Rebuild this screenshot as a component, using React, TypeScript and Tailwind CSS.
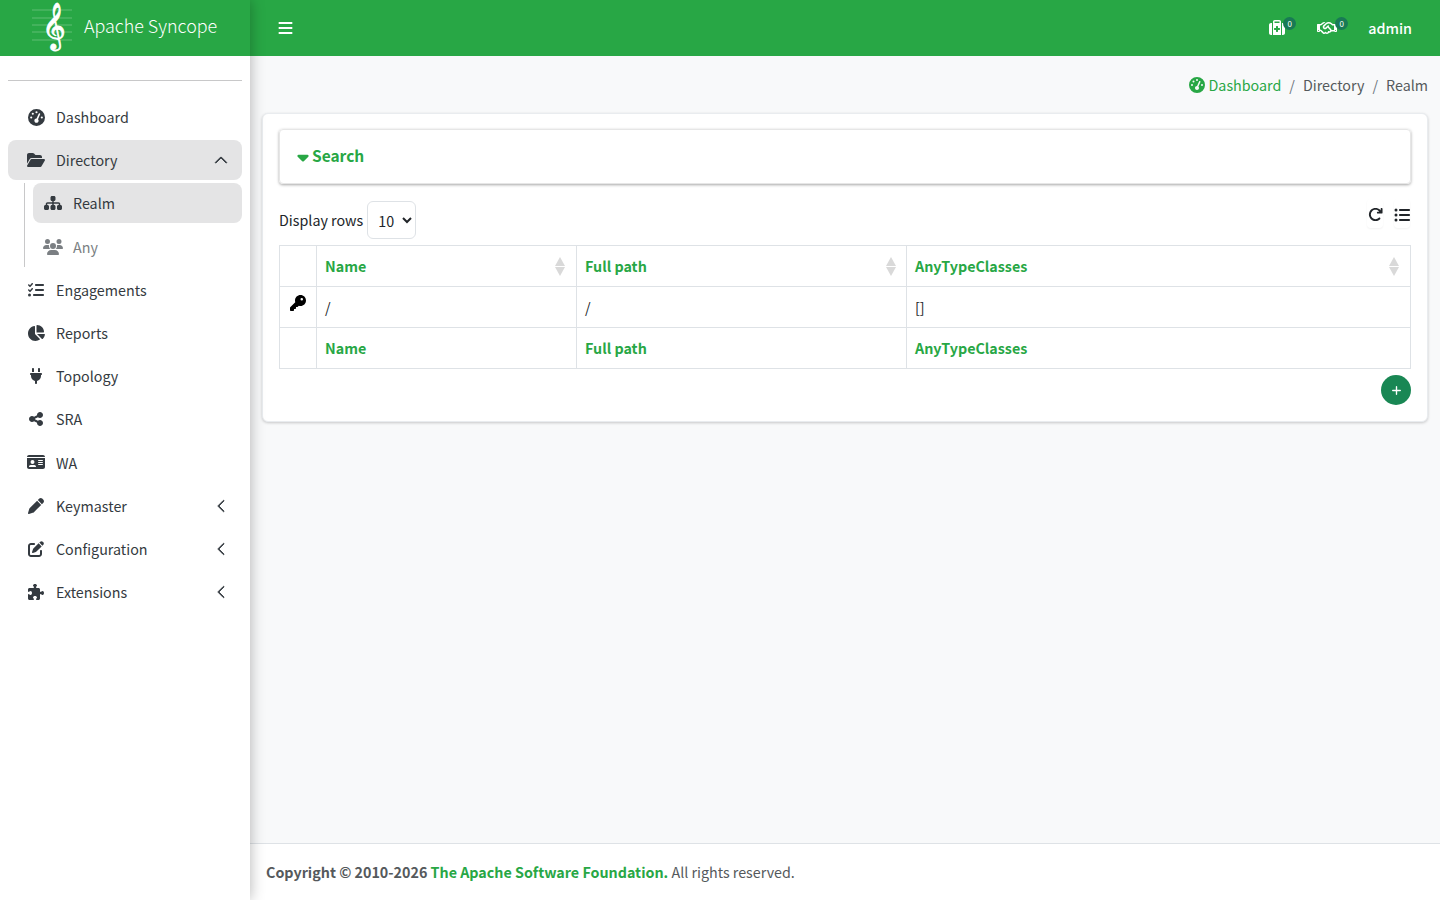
import {
  FaGaugeHigh,
  FaFolderOpen,
  FaSitemap,
  FaUsers,
  FaListCheck,
  FaChartPie,
  FaPlug,
  FaShareNodes,
  FaIdCard,
  FaPen,
  FaPenToSquare,
  FaPuzzlePiece,
  FaBars,
  FaSuitcaseMedical,
  FaRegHandshake,
  FaKey,
  FaCaretDown,
  FaArrowRotateRight,
  FaListUl,
  FaPlus,
} from "react-icons/fa6";
import { BsChevronLeft, BsChevronUp } from "react-icons/bs";
import type { ReactNode } from "react";

const font = "font-['Noto_Sans_CJK_SC','Liberation_Sans',sans-serif]";

function NavItem({ icon, label, chevron, active }: { icon: ReactNode; label: string; chevron?: ReactNode; active?: boolean }) {
  return (
    <div className={`flex h-10 items-center rounded-lg pl-[19px] pr-[14px] text-[#343a40] ${active ? "bg-[#e4e4e5]" : ""}`}>
      <span className="flex w-[18px] justify-center">{icon}</span>
      <span className="ml-[11px] flex-1 text-[14.3px]">{label}</span>
      {chevron}
    </div>
  );
}

const left = <BsChevronLeft className="h-[14px] w-[14px] stroke-1" />;

function Sidebar() {
  return (
    <aside className="z-10 flex w-[250px] shrink-0 flex-col bg-white shadow-[0_0_14px_rgba(0,0,0,0.3)]">
      <div className="flex h-14 items-center bg-[#28a745] pl-[32px] text-white">
        <div className="relative h-[50px] w-10">
          <svg className="absolute inset-0" width="40" height="50" viewBox="0 0 40 50">
            <path d="M0 7h40M0 15h40M0 22h40M0 29h40M0 37h40" stroke="#fff" strokeOpacity="0.25" strokeWidth="1" />
          </svg>
          <span className="absolute left-[10px] top-[-2px] font-['DejaVu_Sans',sans-serif] text-[40px] leading-[48px] [-webkit-text-stroke:0.8px_white]">𝄞</span>
        </div>
        <span className="ml-[12px] pb-[6px] text-[17.9px] font-light">Apache Syncope</span>
      </div>
      <div className="px-2">
        <div className="mt-6 border-t border-[#c8c8c9]" />
        <nav className="mt-4 flex flex-col gap-[3.2px]">
          <NavItem icon={<FaGaugeHigh className="h-[17px] w-[17px]" />} label="Dashboard" />
          <NavItem
            icon={<FaFolderOpen className="h-4 w-[18px]" />}
            label="Directory"
            active
            chevron={<BsChevronUp className="h-[14px] w-[14px] stroke-1" />}
          />
          <div className="-mb-[0.15px] -mt-[0.8px] ml-4 flex flex-col gap-1 border-l border-[#c8c8c9] pl-2">
            <div className="flex h-10 items-center rounded-lg bg-[#e4e4e5] pl-[11px] text-[#343a40]">
              <FaSitemap className="h-4 w-[18px]" />
              <span className="ml-[11px] text-[14.3px]">Realm</span>
            </div>
            <div className="flex h-10 items-center pl-[10px] text-[#7b7f83]">
              <FaUsers className="h-4 w-5" />
              <span className="ml-[10px] text-[14.3px]">Any</span>
            </div>
          </div>
          <NavItem icon={<FaListCheck className="h-4 w-4" />} label="Engagements" />
          <NavItem icon={<FaChartPie className="h-4 w-[18px]" />} label="Reports" />
          <NavItem icon={<FaPlug className="h-4 w-3" />} label="Topology" />
          <NavItem icon={<FaShareNodes className="h-4 w-[14px]" />} label="SRA" />
          <NavItem icon={<FaIdCard className="h-4 w-[18px]" />} label="WA" />
          <NavItem icon={<FaPen className="h-4 w-4" />} label="Keymaster" chevron={left} />
          <NavItem icon={<FaPenToSquare className="h-4 w-4" />} label="Configuration" chevron={left} />
          <NavItem icon={<FaPuzzlePiece className="h-4 w-4" />} label="Extensions" chevron={left} />
        </nav>
      </div>
    </aside>
  );
}

function Badge({ n, className }: { n: number; className: string }) {
  return (
    <span className={`absolute flex h-[13px] w-[13px] items-center justify-center rounded-full bg-[#187a55] text-[8px] leading-none text-white ${className}`}>
      {n}
    </span>
  );
}

function SortHead({ label, sort, className = "pr-[3px]" }: { label: string; sort?: boolean; className?: string }) {
  return (
    <div className={`flex items-center justify-between ${className}`}>
      <span className="font-bold text-[#28a745]">{label}</span>
      {sort && (
        <span className="flex flex-col gap-[1px]">
          <span className="h-0 w-0 border-x-[5px] border-b-[9px] border-x-transparent border-b-[#d9d9d9]" />
          <span className="h-0 w-0 border-x-[5px] border-t-[9px] border-x-transparent border-t-[#d9d9d9]" />
        </span>
      )}
    </div>
  );
}

const cell = "border border-[#dee2e6] px-2 py-0 h-[41px]";

export default function App() {
  return (
    <div className={`flex h-[900px] w-[1440px] overflow-hidden text-[14.3px] text-[#212529] ${font}`}>
      <Sidebar />
      <div className="flex flex-1 flex-col bg-[#f8f9fa]">
        <header className="flex h-14 shrink-0 items-center bg-[#28a745] pl-[28px] pr-[28px] text-white">
          <FaBars className="h-4 w-[15px]" />
          <div className="ml-auto flex items-center">
            <span className="relative">
              <FaSuitcaseMedical className="h-4 w-4" />
              <Badge n={0} className="left-[14px] top-[-3px]" />
            </span>
            <span className="relative ml-[32px]">
              <FaRegHandshake className="h-4 w-5" />
              <Badge n={0} className="left-[18px] top-[-3px]" />
            </span>
            <span className="ml-[31px] font-medium">admin</span>
          </div>
        </header>

        <main className="flex-1 px-[12px]">
          <div className="flex h-[57px] items-center justify-end pt-[1px]">
            <FaGaugeHigh className="h-4 w-4 text-[#28a745]" />
            <span className="ml-[4px] text-[#28a745]">Dashboard</span>
            <span className="mx-2 text-[#6c757d]">/</span>
            <span className="text-[#55595c]">Directory</span>
            <span className="mx-2 text-[#6c757d]">/</span>
            <span className="text-[#55595c]">Realm</span>
          </div>

          <section className="h-[309px] rounded-[6px] border border-[#e9ecef] bg-white px-4 py-[15px] shadow-[0_1px_3px_rgba(0,0,0,0.2)]">
            <div className="flex h-[55px] items-center rounded-[4px] border border-[#e6e6e6] pl-[17px] shadow-[0_1px_3px_rgba(0,0,0,0.35)]">
              <FaCaretDown className="h-[18px] w-[12px] text-[#28a745]" />
              <span className="ml-[3px] pb-[1px] text-[15.5px] font-bold text-[#28a745]">Search</span>
            </div>

            <div className="relative mt-[17px] flex h-[38px] items-center">
              <span>Display rows</span>
              <select className="ml-[4px] h-[38px] w-[49px] rounded-[6px] border border-[#dee2e6] bg-white pl-[6px] text-[14.3px]">
                <option>10</option>
              </select>
              <div className="absolute right-[1px] top-[-2px] flex gap-[11px] text-[#212529]">
                <span className="flex h-[29px] w-[16px] justify-center rounded-[4px] pt-[8px] shadow-[0_1px_2px_rgba(0,0,0,0.05)]">
                  <FaArrowRotateRight className="h-[15px] w-[15px]" />
                </span>
                <span className="flex h-[29px] w-[16px] justify-center rounded-[4px] pt-[8px] shadow-[0_1px_2px_rgba(0,0,0,0.05)]">
                  <FaListUl className="h-4 w-4" />
                </span>
              </div>
            </div>

            <table className="mt-[6px] w-[1132px] table-fixed border-collapse">
              <colgroup>
                <col className="w-[37px]" />
                <col className="w-[260px]" />
                <col className="w-[330px]" />
                <col />
              </colgroup>
              <tbody>
                <tr>
                  <td className={cell} />
                  <td className={cell}><SortHead label="Name" sort /></td>
                  <td className={cell}><SortHead label="Full path" sort className="pr-[2px]" /></td>
                  <td className={cell}><SortHead label="AnyTypeClasses" sort /></td>
                </tr>
                <tr>
                  <td className={`${cell} align-top pt-[8px]`}><FaKey className="ml-[2px] h-4 w-4 text-black" /></td>
                  <td className={cell}>/</td>
                  <td className={cell}>/</td>
                  <td className={cell}>[]</td>
                </tr>
                <tr>
                  <td className={cell} />
                  <td className={cell}><SortHead label="Name" /></td>
                  <td className={cell}><SortHead label="Full path" /></td>
                  <td className={cell}><SortHead label="AnyTypeClasses" /></td>
                </tr>
              </tbody>
            </table>

            <div className="mt-[6px] flex justify-end">
              <span className="flex h-[30px] w-[30px] items-center justify-center rounded-full bg-[#198754] text-white">
                <FaPlus className="h-[11px] w-[11px]" />
              </span>
            </div>
          </section>
        </main>

        <footer className="flex h-[57px] shrink-0 items-center border-t border-[#dee2e6] bg-white pl-4 text-[#55595c]">
          <b>Copyright © 2010-2026&nbsp;</b>
          <b className="text-[#28a745]">The Apache Software Foundation.</b>
          <span>&nbsp;All rights reserved.</span>
        </footer>
      </div>
    </div>
  );
}
